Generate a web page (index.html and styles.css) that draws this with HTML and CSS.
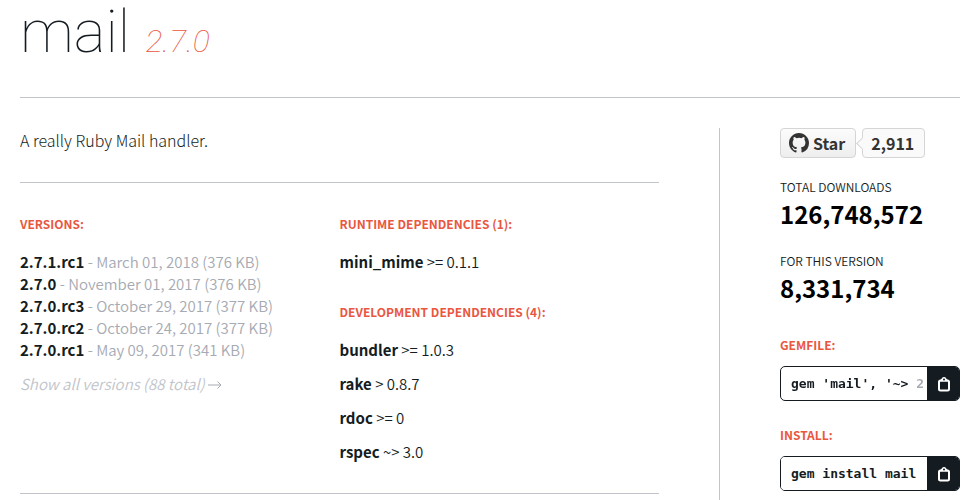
FILE: index.html
```
<!DOCTYPE html>
<html lang="en">
<head>
<meta charset="utf-8">
<title>mail | RubyGems.org</title>
<link rel="stylesheet" href="styles.css">
</head>
<body>
<main class="page">
  <header class="page-header">
    <h1 class="gem-name"><a href="#">mail</a> <i class="gem-version">2.7.0</i></h1>
  </header>
  <div class="layout">
    <div class="content">
      <p class="description">A really Ruby Mail handler.</p>
      <div class="details">
        <section>
          <h2 class="heading">Versions:</h2>
          <ol class="versions">
            <li><a href="#">2.7.1.rc1</a> <small>- March 01, 2018 (376 KB)</small></li>
            <li><a href="#">2.7.0</a> <small>- November 01, 2017 (376 KB)</small></li>
            <li><a href="#">2.7.0.rc3</a> <small>- October 29, 2017 (377 KB)</small></li>
            <li><a href="#">2.7.0.rc2</a> <small>- October 24, 2017 (377 KB)</small></li>
            <li><a href="#">2.7.0.rc1</a> <small>- May 09, 2017 (341 KB)</small></li>
          </ol>
          <a class="show-all" href="#">Show all versions (88 total)<svg class="arrow" viewBox="0 0 14 10" aria-hidden="true"><path d="M0 5h13M9.500 1.500 13 5 9.500 8.500"/></svg></a>
        </section>
        <div>
          <section class="dependency-group">
            <h2 class="heading">Runtime Dependencies (1):</h2>
            <ul class="dependencies">
              <li><a href="#">mini_mime</a> &gt;= 0.1.1</li>
            </ul>
          </section>
          <section class="dependency-group">
            <h2 class="heading">Development Dependencies (4):</h2>
            <ul class="dependencies">
              <li><a href="#">bundler</a> &gt;= 1.0.3</li>
              <li><a href="#">rake</a> &gt; 0.8.7</li>
              <li><a href="#">rdoc</a> &gt;= 0</li>
              <li><a href="#">rspec</a> ~&gt; 3.0</li>
            </ul>
          </section>
        </div>
      </div>
    </div>
    <aside class="sidebar">
      <div class="github">
        <a class="star" href="#"><svg class="octocat" viewBox="0 0 16 16" aria-hidden="true"><path d="M8 0C3.580 0 0 3.580 0 8c0 3.540 2.290 6.530 5.470 7.590.4.070.55-.17.55-.38 0-.19-.01-.82-.01-1.490-2.010.37-2.530-.49-2.690-.94-.09-.23-.48-.94-.82-1.130-.28-.15-.68-.52-.01-.53.63-.01 1.080.58 1.230.82.72 1.210 1.870.87 2.330.66.07-.52.28-.87.51-1.070-1.780-.2-3.640-.89-3.640-3.950 0-.87.31-1.590.82-2.150-.08-.2-.36-1.020.08-2.120 0 0 .67-.21 2.200.82a7.600 7.600 0 0 1 4 0c1.530-1.040 2.200-.82 2.200-.82.44 1.100.16 1.920.08 2.120.51.56.82 1.270.82 2.150 0 3.070-1.870 3.750-3.650 3.950.29.25.54.73.54 1.480 0 1.070-.01 1.930-.01 2.200 0 .21.15.46.55.38A8 8 0 0 0 16 8c0-4.420-3.580-8-8-8z"/></svg>Star</a>
        <a class="star-count" href="#">2,911</a>
      </div>
      <h2 class="stat">Total downloads <strong>126,748,572</strong></h2>
      <h2 class="stat">For this version <strong>8,331,734</strong></h2>
      <div class="snippet">
        <label class="heading" for="gemfile">Gemfile:</label>
        <div class="copy-box">
          <input class="faded" id="gemfile" type="text" readonly value="gem 'mail', '~&gt; 2.7'">
          <button type="button" aria-label="Copy Gemfile line"><svg viewBox="0 0 12 16" aria-hidden="true"><rect class="board" x="1" y="4.500" width="10" height="10" rx="1.500"/><path class="clip" d="M1 5.500 4 2.200Q4.500 1 6 1t2 1.200L11 5.500z"/><circle class="hole" cx="6" cy="3.500" r="1"/></svg></button>
        </div>
      </div>
      <div class="snippet">
        <label class="heading" for="install">Install:</label>
        <div class="copy-box">
          <input id="install" type="text" readonly value="gem install mail">
          <button type="button" aria-label="Copy install command"><svg viewBox="0 0 12 16" aria-hidden="true"><rect class="board" x="1" y="4.500" width="10" height="10" rx="1.500"/><path class="clip" d="M1 5.500 4 2.200Q4.500 1 6 1t2 1.200L11 5.500z"/><circle class="hole" cx="6" cy="3.500" r="1"/></svg></button>
        </div>
      </div>
    </aside>
  </div>
</main>
</body>
</html>
```
FILE: styles.css
```
* {
  box-sizing: border-box;
}

body {
  margin: 0;
  background: #fff;
  color: #141c22;
  font: 15px/22px "Noto Sans CJK SC", "Noto Sans", sans-serif;
}

h1, h2, p, ol, ul {
  margin: 0;
  padding: 0;
  list-style: none;
}

a {
  color: inherit;
  text-decoration: none;
}

.page {
  display: flex;
  flex-direction: column;
  min-height: 100vh;
  margin: 0 18px 0 20px;
}

.page-header {
  height: 98px;
  border-bottom: 1px solid #c1c4ca;
}

.gem-name {
  font: 100 60px/64px Roboto, sans-serif;
}

.gem-version {
  margin-left: 1px;
  color: #e9573f;
  font-size: 32px;
}

.layout {
  display: flex;
  flex: 1;
  padding-top: 30px;
}

.content {
  flex: 1;
  margin-right: 60px;
}

.description {
  padding: 1px 0 31px;
  border-bottom: 1px solid #c1c4ca;
  font-size: 16px;
  font-weight: 300;
}

.details {
  display: grid;
  grid-template-columns: 1fr 1fr;
  padding: 30px 0;
  border-bottom: 1px solid #c1c4ca;
}

.heading {
  display: block;
  color: #e9573f;
  font-size: 12px;
  font-weight: 700;
  line-height: 22px;
  text-transform: uppercase;
}

.versions {
  margin-top: 16px;
}

.versions a,
.dependencies a {
  font-weight: 700;
}

.versions small {
  color: #a6aab2;
  font-size: 15px;
  font-weight: 350;
}

.show-all {
  display: block;
  margin-top: 12px;
  color: #c1c4ca;
  font-style: italic;
  font-weight: 350;
}

.arrow {
  width: 14px;
  height: 10px;
  margin-left: 3px;
  fill: none;
  stroke: #a6aab2;
}

.dependencies {
  display: grid;
  gap: 12px;
  margin-top: 16px;
  font-weight: 350;
}

.dependency-group + .dependency-group {
  margin-top: 28px;
}

.sidebar {
  width: 241px;
  padding-left: 60px;
  border-left: 1px solid #c1c4ca;
}

.github {
  display: flex;
  gap: 6px;
  height: 30px;
  margin-bottom: 19px;
  color: #333;
  font-size: 16px;
  font-weight: 700;
  line-height: 28px;
}

.star,
.star-count {
  display: flex;
  align-items: center;
  padding: 0 10px 0 8px;
  border: 1px solid #d5d5d5;
  border-radius: 4px;
}

.star {
  gap: 4px;
  background: linear-gradient(#fcfcfc, #eee);
}

.star-count {
  position: relative;
  background: #fafafa;
}

.star-count::before {
  content: "";
  position: absolute;
  top: 10px;
  left: -5px;
  width: 8px;
  height: 8px;
  border: solid #d5d5d5;
  border-width: 0 0 1px 1px;
  background: #fafafa;
  transform: rotate(45deg);
}

.octocat {
  width: 20px;
  height: 20px;
  fill: #333;
}

.stat {
  margin-bottom: 20px;
  font-size: 12px;
  font-weight: 350;
  line-height: 20px;
  text-transform: uppercase;
}

.stat strong {
  display: block;
  color: #000;
  font-size: 24px;
  font-weight: 700;
  line-height: 34px;
}

.stat + .snippet {
  margin-top: 29px;
}

.snippet {
  margin-top: 23px;
}

.copy-box {
  display: flex;
  height: 35px;
  margin-top: 10px;
  overflow: hidden;
  border: 1px solid #141c22;
  border-radius: 5px;
}

.copy-box input {
  flex: 1;
  min-width: 0;
  margin-right: 2px;
  padding: 0 0 0 10px;
  border: 0;
  background: #fff;
  color: #141c22;
  font: 700 13px "DejaVu Sans Mono", monospace;
}

.copy-box .faded {
  background: linear-gradient(to right, #141c22 132px, #a6aab2 132px);
  background-clip: text;
  color: transparent;
}

.copy-box button {
  width: 32px;
  padding: 0 0 0 2px;
  border: 0;
  background: #141c22;
}

.copy-box svg {
  display: block;
  width: 12px;
  height: 16px;
  margin: 0 auto;
}

.board {
  fill: none;
  stroke: #fff;
  stroke-width: 2;
}

.clip {
  fill: #fff;
}

.hole {
  fill: #141c22;
}
```
